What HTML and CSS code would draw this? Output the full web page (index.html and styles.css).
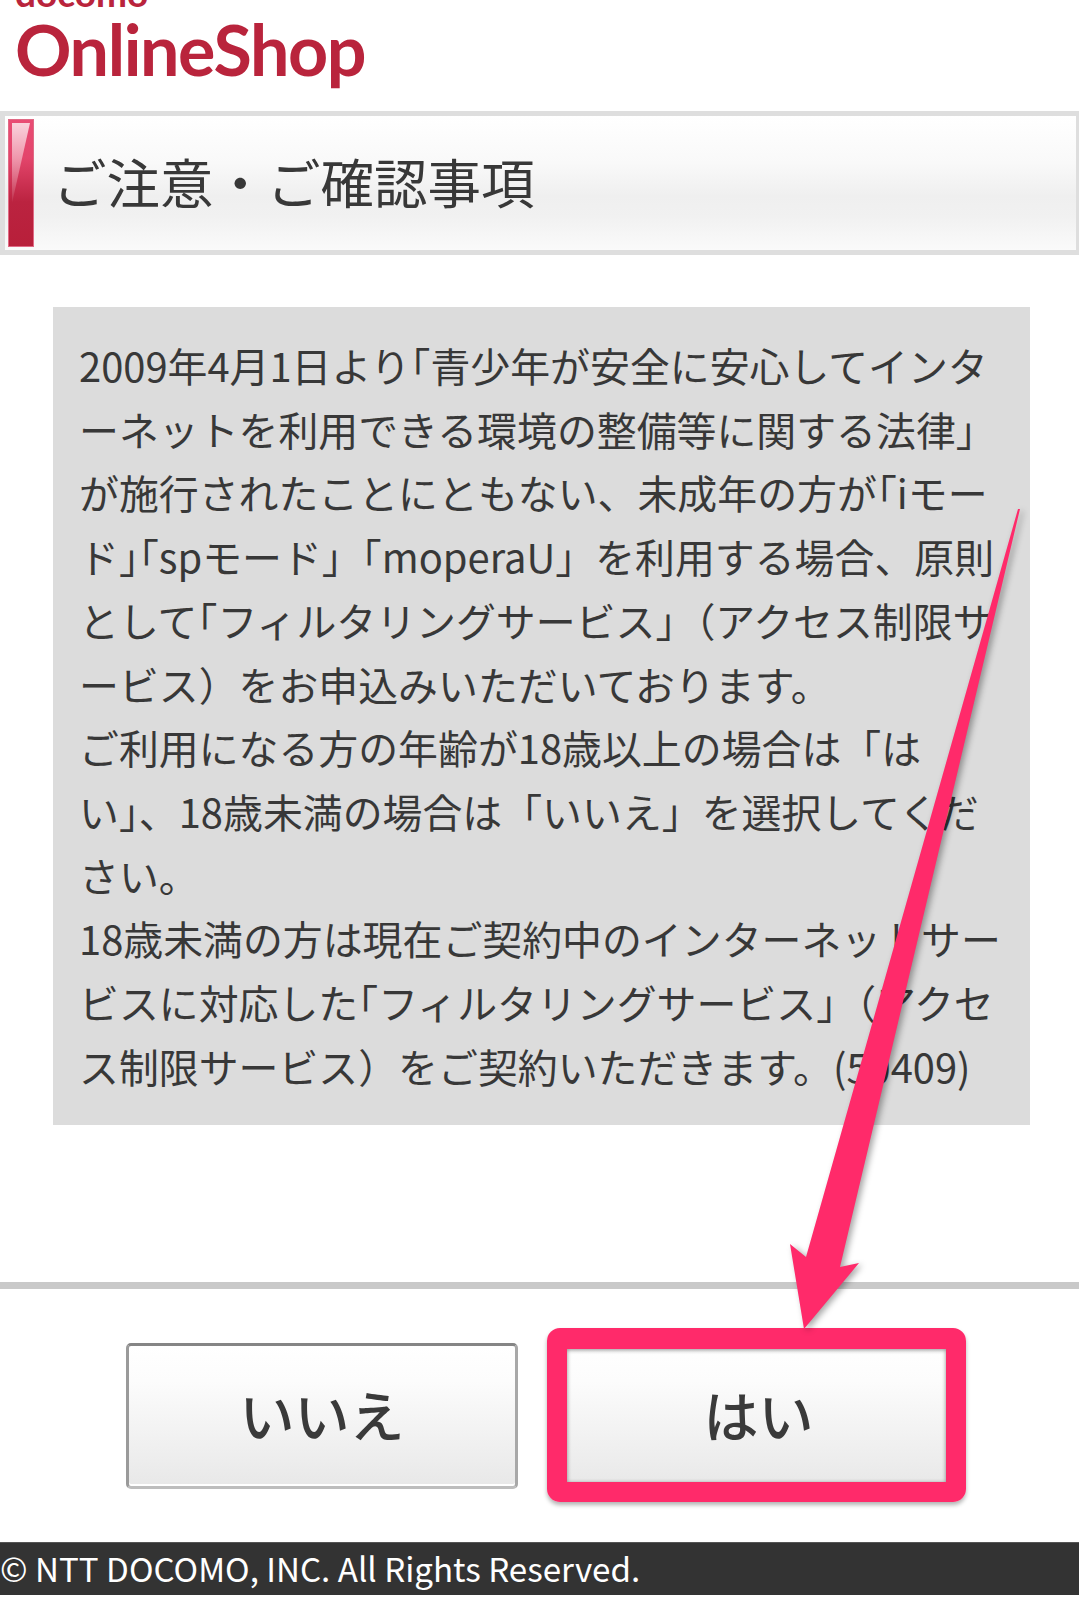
FILE: index.html
```html
<!DOCTYPE html>
<html lang="ja">
<head>
    <meta charset="UTF-8">
    <title>ご注意・ご確認事項</title>
    <link rel="stylesheet" href="styles.css">
</head>
<body>
<header class="logo">
    <div class="logo_sub">docomo</div>
    <div class="logo_main">OnlineShop</div>
</header>
<h1 class="title"><span class="title_mark"></span><span class="title_text">ご注意・ご確認事項</span></h1>
<div class="notice">
    2009年4月1日より<span class="half">「</span>青少年が安全に安心してインタ<br>
    ーネットを利用できる環境の整備等に関する法律」<br>
    が施行されたことにともない、未成年の方が<span class="half">「</span>iモー<br>
    ド」<span class="half">「</span>spモード」「moperaU」を利用する場合、原則<br>
    として<span class="half">「</span>フィルタリングサービス」（アクセス制限サ<br>
    ービス）をお申込みいただいております。<br>
    ご利用になる方の年齢が18歳以上の場合は「は<br>
    い」、18歳未満の場合は「いいえ」を選択してくだ<br>
    さい。<br>
    18歳未満の方は現在ご契約中のインターネットサー<br>
    ビスに対応した<span class="half">「</span>フィルタリングサービス」（アクセ<br>
    ス制限サービス）をご契約いただきます。(50409)
</div>
<div class="actions">
    <a class="btn" href="javascript:void(0)"><span class="btn_text">いいえ</span></a>
    <a class="btn" href="javascript:void(0)"><span class="btn_text btn_yes">はい</span><span class="frame"></span></a>
</div>
<footer class="copy">© NTT DOCOMO, INC. All Rights Reserved.</footer>
<svg class="arrow" width="1079" height="1601" viewBox="0 0 1079 1601">
    <path d="M1018 509 L1020 509 L840 1267 L859 1263 L804 1329 L790 1244 L806 1257 Z"/>
</svg>
</body>
</html>
```

FILE: styles.css
```css
body{
    position:relative;
    margin:0;
    height:1601px;
    overflow:hidden;
    background:#fff;
    color:#383838;
    font-family:"Noto Sans CJK JP",sans-serif;
}
.logo{height:111px;overflow:hidden;padding-left:15px;box-sizing:border-box;color:#b9243c;font-family:Lato,"Open Sans",sans-serif;font-weight:700;}
.logo_sub{margin-top:-28px;height:42px;font-size:37px;line-height:42px;}
.logo_main{font-size:70px;line-height:70px;letter-spacing:-1.4px;}
.title{
    display:flex;
    align-items:center;
    box-sizing:border-box;
    margin:0;
    padding:3px;
    height:144px;
    border:5px solid #dedede;
    border-right-width:3px;
    background:linear-gradient(#fff,#f9f9f9 35%,#efefef 60%,#f1f1f1 75%,#fafafa);
    font-size:53.5px;
    font-weight:400;
}
.title_text{margin-top:-6px;}
.title_mark{
    position:relative;
    overflow:hidden;
    align-self:stretch;
    box-sizing:border-box;
    margin-right:19px;
    width:26px;
    border:1px solid #e06a85;
    background:linear-gradient(#e94c74,#e3456b 30%,#bb2340 65%,#b81f3a);
}
.title_mark:before{
    content:"";
    position:absolute;
    top:3px;
    left:3px;
    width:18px;
    height:80px;
    background:linear-gradient(rgba(255,255,255,.75),rgba(255,255,255,.05));
    clip-path:polygon(0 0,100% 0,0 100%);
}
.notice{
    box-sizing:border-box;
    margin:52px 49px 0 53px;
    padding:26px 0 28px 26px;
    height:818px;
    background:#dcdcdc;
    font-size:39.9px;
    line-height:63.7px;
    white-space:nowrap;
}
.half{margin-left:-.5em;}
.actions{
    display:flex;
    gap:43px;
    margin-top:157px;
    padding:54px 0 53px 126px;
    border-top:7px solid #c9c9c9;
}
.btn{
    position:relative;
    display:flex;
    align-items:center;
    justify-content:center;
    box-sizing:border-box;
    width:392px;
    height:146px;
    border:3px solid #a8a8a8;
    border-top-color:#858585;
    border-left-color:#9a9a9a;
    border-bottom-color:#bdbdbd;
    border-radius:5px;
    box-shadow:inset 0 -2px 0 #fff;
    background:linear-gradient(#fff,#fcfcfc 25%,#e8e8e8);
    color:#3a3a3a;
    font-size:55px;
    font-weight:500;
    text-decoration:none;
}
.btn_text{margin-top:-7px;}
.btn_yes{margin-left:3px;}
.frame{
    position:absolute;
    top:-18px;
    left:-17px;
    right:-16px;
    bottom:-16px;
    border:solid #ff2a6a;
    border-width:21px 20px 20px;
    border-radius:13px;
    box-shadow:0 3px 4px rgba(0,0,0,.3),inset 0 1px 4px rgba(0,0,0,.45);
}
.copy{
    box-sizing:border-box;
    height:53px;
    border-top:1px solid #555;
    background:#333;
    color:#fff;
    font-size:33.15px;
    line-height:51px;
    white-space:nowrap;
}
.arrow{
    position:absolute;
    top:0;
    left:0;
    fill:#ff2a6a;
    filter:drop-shadow(3px 2px 3px rgba(0,0,0,.35));
}
```
